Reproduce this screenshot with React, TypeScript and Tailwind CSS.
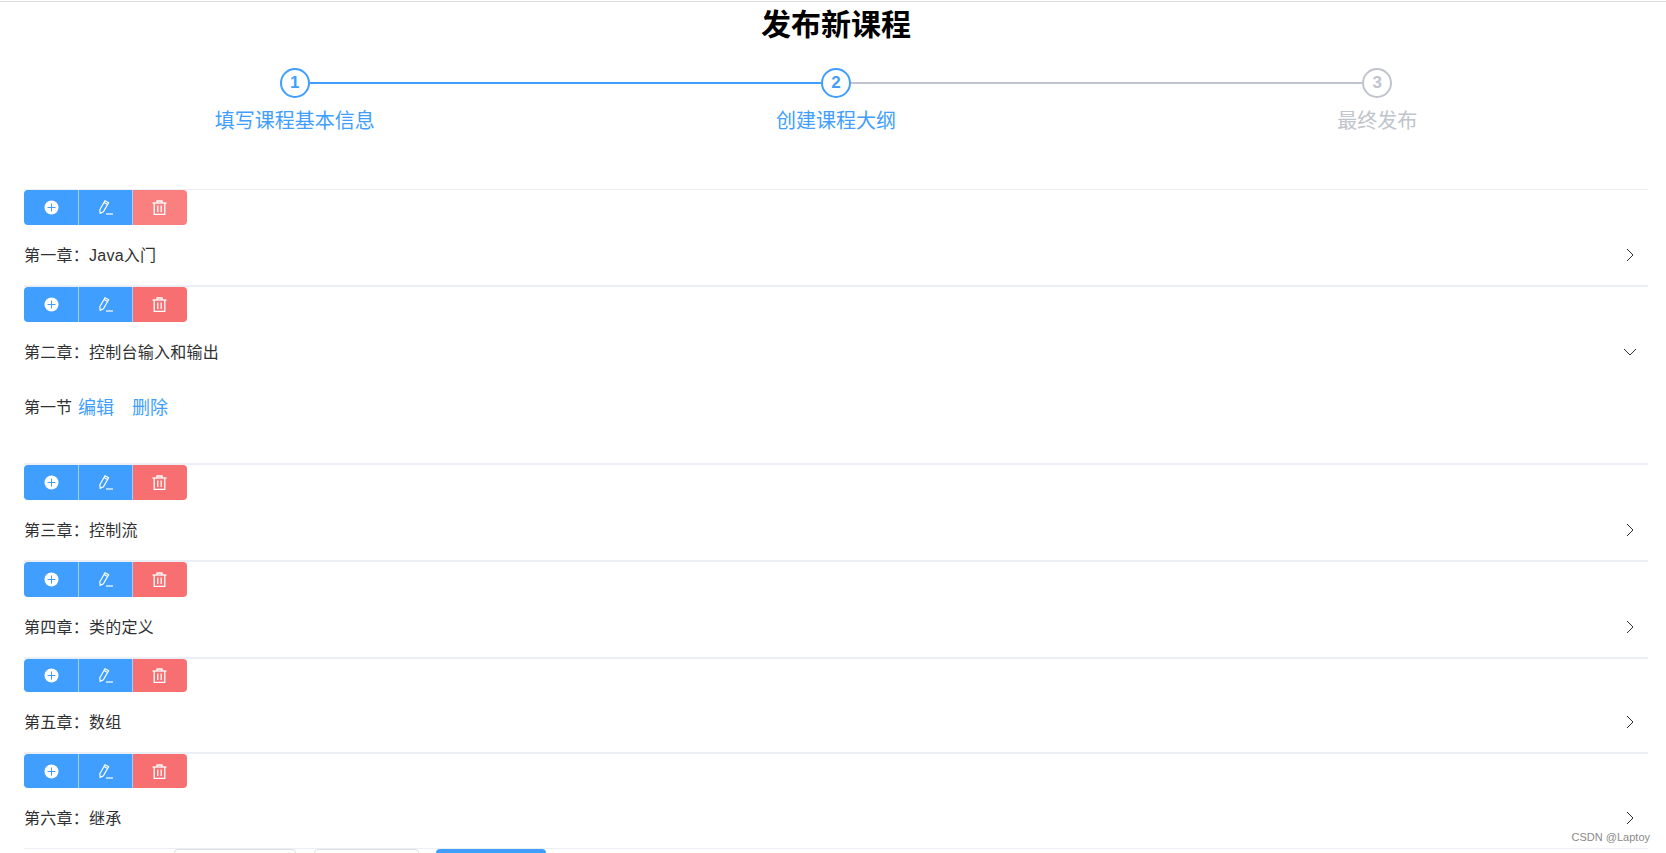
const FONT = "font-['Liberation_Sans','Noto_Sans_CJK_SC',sans-serif]";

const steps = [
  { no: 1, title: "填写课程基本信息", done: true },
  { no: 2, title: "创建课程大纲", done: true },
  { no: 3, title: "最终发布", done: false },
];

const chapters = [
  { title: "第一章：Java入门", open: false, hover: true, line: "border-t", btn: "h-[35px]" },
  { title: "第二章：控制台输入和输出", open: true, hover: false, line: "border-t-2", btn: "h-[35px]" },
  { title: "第三章：控制流", open: false, hover: false, line: "border-t-2", btn: "h-[35px]" },
  { title: "第四章：类的定义", open: false, hover: false, line: "border-t-2", btn: "h-[35px]" },
  { title: "第五章：数组", open: false, hover: false, line: "border-t-2", btn: "h-[33px]" },
  { title: "第六章：继承", open: false, hover: false, line: "border-t-2", btn: "h-[34px]" },
];

const PlusIcon = () => (
  <svg className="ml-0.5" width="15" height="15" viewBox="0 0 15 15">
    <circle cx="7.5" cy="7.5" r="7" fill="#fff" />
    <path d="M7.5 3.5v8M3.5 7.5h8" stroke="#409eff" strokeWidth="1" />
  </svg>
);

const EditIcon = () => (
  <svg width="14" height="15" viewBox="0 0 14 15" fill="none" stroke="#fff" strokeWidth="1.2">
    <path d="M6 0.8 9.6 2.8 4.4 11.8 1.2 13.4 0.8 9.8z" />
    <path d="M5 2.6l3.6 2" />
    <path d="M7 14H14" />
  </svg>
);

const TrashIcon = () => (
  <svg className="mr-0.5" width="15" height="15" viewBox="0 0 15 15" fill="none" stroke="#fff" strokeWidth="1.3">
    <path d="M0.5 3h14" />
    <path d="M5 3V1h5v2" />
    <path d="M2.2 3v11.3h10.6V3" />
    <path d="M5.8 5.5v6.5M9.2 5.5v6.5" />
  </svg>
);

const Chevron = ({ open }: { open: boolean }) => (
  <svg width="16" height="16" viewBox="0 0 16 16" fill="none" stroke="#303133" strokeWidth="1">
    {open ? <path d="M2 5l6 6 6-6" /> : <path d="M5 2l6 6-6 6" />}
  </svg>
);

const Step = ({ no, title, done, index }: { no: number; title: string; done: boolean; index: number }) => {
  const color = done ? "text-[#409eff]" : "text-[#c0c4cc]";
  return (
    <div className="flex flex-col items-center">
      <div className="flex items-center w-full h-7">
        <div className={index === 0 ? "flex-1" : done ? "flex-1 h-0.5 bg-[#409eff]" : "flex-1 h-0.5 bg-[#c0c4cc]"} />
        <div
          className={`w-[30px] h-[30px] shrink-0 rounded-full border-2 flex items-center justify-center text-[17px] font-bold ${color} ${
            done ? "border-[#409eff]" : "border-[#c0c4cc]"
          }`}
        >
          {no}
        </div>
        <div className={index === 2 ? "flex-1" : index === 1 ? "flex-1 h-0.5 bg-[#c0c4cc]" : "flex-1 h-0.5 bg-[#409eff]"} />
      </div>
      <div className={`mt-[9px] text-[20px] leading-[30px] ${color}`}>{title}</div>
    </div>
  );
};

type ChapterProps = { title: string; open: boolean; hover: boolean; line: string; btn: string };

const Chapter = ({ title, open, hover, line, btn }: ChapterProps) => (
  <div className={`border-[#ebeef5] ${line}`}>
    <div className={`flex w-[163px] ${btn}`}>
      <button className="flex-1 flex items-center justify-center bg-[#409eff] rounded-l border-r border-white/50">
        <PlusIcon />
      </button>
      <button className="flex-1 flex items-center justify-center bg-[#409eff] border-r border-white/50">
        <EditIcon />
      </button>
      <button className={`flex-1 flex items-center justify-center rounded-r ${hover ? "bg-[#fa7f7f]" : "bg-[#f76f70]"}`}>
        <TrashIcon />
      </button>
    </div>
    <div className="flex items-center justify-between h-[60px] text-base tracking-[0.25px] text-[#303133]">
      <span className="pt-px">{title}</span>
      <span className="mr-2.5">
        <Chevron open={open} />
      </span>
    </div>
    {open && (
      <div className="h-[81px] pt-3 text-base text-[#303133]">
        <div className="flex items-center h-7">
          <span>第一节</span>
          <a className="ml-1.5 text-[18px] text-[#409eff]">编辑</a>
          <a className="ml-[18px] text-[18px] text-[#409eff]">删除</a>
        </div>
      </div>
    )}
  </div>
);

export default function App() {
  return (
    <div className={`relative h-[853px] overflow-hidden bg-white ${FONT}`}>
      <div className="h-px mt-px bg-[#dcdcdc]" />
      <div className="ml-6 w-[1624px]">
        <h1 className="h-[46px] pt-px text-center text-[30px] leading-[44px] font-bold text-black">发布新课程</h1>
        <div className="grid grid-cols-3 mt-[21px]">
          {steps.map((s, i) => (
            <Step key={s.no} no={s.no} title={s.title} done={s.done} index={i} />
          ))}
        </div>
        <div className="mt-[53px]">
          {chapters.map((c) => (
            <Chapter key={c.title} {...c} />
          ))}
          <div className="flex border-t border-[#ebeef5] pl-[150px]">
            <button className="w-[122px] h-10 rounded border border-[#dcdfe6] bg-white" />
            <button className="ml-[18px] w-[105px] h-10 rounded border border-[#dcdfe6] bg-white" />
            <button className="ml-[17px] w-[110px] h-10 rounded bg-[#409eff]" />
          </div>
        </div>
      </div>
      <div className="absolute right-4 bottom-[9px] text-[11px] leading-[14px] text-[#8a8a8a]">CSDN @Laptoy</div>
    </div>
  );
}
